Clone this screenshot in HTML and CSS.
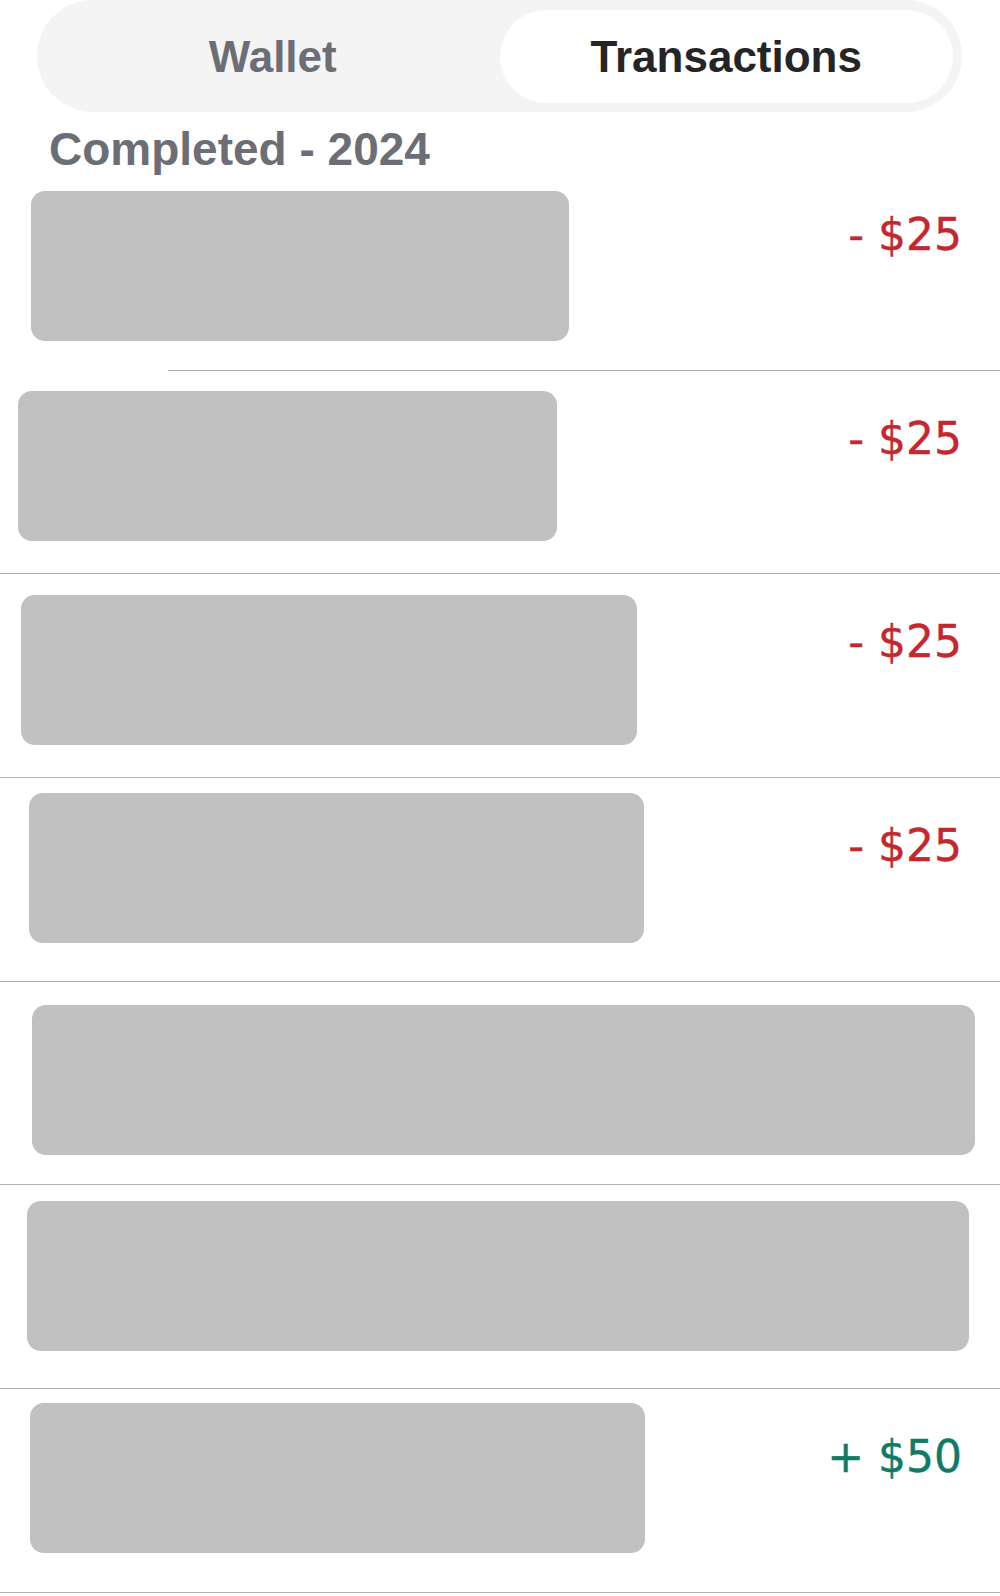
FILE: index.html
```html
<!DOCTYPE html>
<html lang="en">
<head>
  <meta charset="UTF-8">
  <title>Transactions</title>
  <link rel="stylesheet" href="styles.css">
</head>
<body>
  <div class="tabs">
    <div class="tab">Wallet</div>
    <div class="tab active">Transactions</div>
  </div>

  <h2 class="section-label">Completed - 2024</h2>

  <div class="tx">
    <div class="placeholder ph-1"></div>
    <div class="amount debit">- $25</div>
  </div>
  <div class="rule rule-inset"></div>

  <div class="tx">
    <div class="placeholder ph-2"></div>
    <div class="amount debit">- $25</div>
  </div>
  <div class="rule"></div>

  <div class="tx">
    <div class="placeholder ph-3"></div>
    <div class="amount debit">- $25</div>
  </div>
  <div class="rule"></div>

  <div class="tx">
    <div class="placeholder ph-4"></div>
    <div class="amount debit">- $25</div>
  </div>
  <div class="rule"></div>

  <div class="tx">
    <div class="placeholder ph-5"></div>
  </div>
  <div class="rule"></div>

  <div class="tx">
    <div class="placeholder ph-6"></div>
  </div>
  <div class="rule"></div>

  <div class="tx">
    <div class="placeholder ph-7"></div>
    <div class="amount credit">+ $50</div>
  </div>
  <div class="rule"></div>
</body>
</html>
```

FILE: styles.css
```css
body {
  margin: 0;
  background-color: #fff;
  font-family: "Liberation Sans", Arial, sans-serif;
  overflow: hidden;
}

.tabs {
  display: flex;
  margin: 0 38px 0 37px;
  height: 112px;
  padding: 10px 9px 9px;
  box-sizing: border-box;
  background-color: #f4f4f5;
  border-radius: 56px;
}

.tab {
  flex: 1;
  display: flex;
  align-items: center;
  justify-content: center;
  font-size: 44px;
  font-weight: bold;
  color: #6c6e75;
  border-radius: 47px;
}

.tab.active {
  background-color: #fff;
  color: #252525;
}

.section-label {
  margin: 20px 0 0 49px;
  font-size: 46px;
  line-height: 35px;
  font-weight: bold;
  color: #6c6e75;
}

.tx {
  display: flex;
  justify-content: space-between;
  align-items: flex-start;
  height: 202.7px;
  padding-right: 38px;
}

.rule {
  height: 1px;
  background-color: #b0b0b0;
}

.rule-inset {
  margin-left: 168px;
}

.placeholder {
  height: 150px;
  background-color: #c1c1c1;
  border-radius: 14px;
  flex-shrink: 0;
}

.ph-1 { margin: 24px 0 0 31px; width: 538px; }
.ph-2 { margin: 20px 0 0 18px; width: 539px; }
.ph-3 { margin: 21px 0 0 21px; width: 616px; }
.ph-4 { margin: 15px 0 0 29px; width: 615px; }
.ph-5 { margin: 23px 0 0 32px; width: 943px; }
.ph-6 { margin: 16px 0 0 27px; width: 942px; }
.ph-7 { margin: 14px 0 0 30px; width: 615px; }

.amount {
  margin-top: 46px;
  font-family: "DejaVu Sans", sans-serif;
  font-size: 44px;
  line-height: 44px;
  -webkit-text-stroke: 0.4px currentColor;
  white-space: nowrap;
}

.debit {
  color: #c4282f;
}

.credit {
  color: #117a64;
}
```
